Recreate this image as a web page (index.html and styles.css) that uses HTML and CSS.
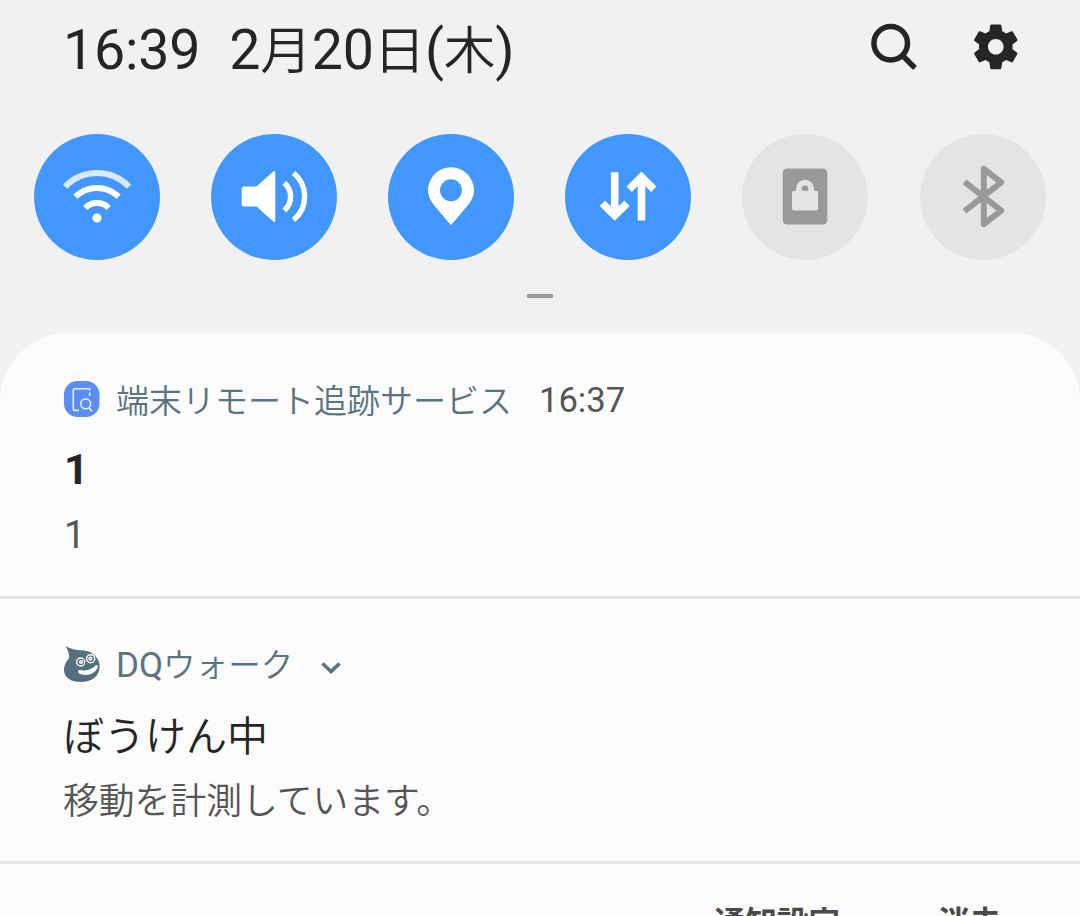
FILE: index.html
```html
<!DOCTYPE html>
<html lang="ja">

<head>
  <meta charset="UTF-8">
  <meta name="viewport" content="width=device-width, initial-scale=1.0">
  <title>通知パネル</title>
  <link rel="stylesheet" href="styles.css">
</head>

<body>

  <header id="status">
    <div id="clock">16:39</div>
    <div id="date">2<span class="jp">月</span>20<span class="jp">日</span>(<span class="jp">木</span>)</div>
    <div id="actions">
      <svg class="search" viewBox="0 0 48 48">
        <circle cx="20.7" cy="20.3" r="16.8" />
        <path d="M32.5 32.5 45 45" />
      </svg>
      <svg class="settings" viewBox="0 0 24 24">
        <path d="M19.43 12.98c.04-.32.07-.64.07-.98s-.03-.66-.07-.98l2.11-1.65c.19-.15.24-.42.12-.64l-2-3.46c-.12-.22-.39-.3-.61-.22l-2.49 1c-.52-.4-1.08-.73-1.69-.98l-.38-2.65C14.46 2.18 14.25 2 14 2h-4c-.25 0-.46.18-.49.42l-.38 2.65c-.61.25-1.17.59-1.69.98l-2.49-1c-.23-.09-.49 0-.61.22l-2 3.46c-.13.22-.07.49.12.64l2.11 1.65c-.04.32-.07.65-.07.98s.03.66.07.98l-2.11 1.65c-.19.15-.24.42-.12.64l2 3.46c.12.22.39.3.61.22l2.49-1c.52.4 1.08.73 1.69.98l.38 2.65c.03.24.24.42.49.42h4c.25 0 .46-.18.49-.42l.38-2.65c.61-.25 1.17-.59 1.69-.98l2.49 1c.23.09.49 0 .61-.22l2-3.46c.12-.22.07-.49-.12-.64l-2.11-1.65zM12 15.5c-1.93 0-3.5-1.57-3.5-3.5s1.57-3.5 3.5-3.5 3.5 1.57 3.5 3.5-1.57 3.5-3.5 3.5z" />
      </svg>
    </div>
  </header>

  <div id="toggles">
    <div class="toggle on">
      <svg viewBox="0 0 126 126">
        <g class="line" stroke-width="6">
          <path d="M31 52.7A44.2 44.2 0 0 1 95 52.7" opacity=".8" />
          <path d="M41.3 62.7A31.4 31.4 0 0 1 84.7 62.7" />
          <path d="M51.3 74A16.2 16.2 0 0 1 74.7 74" />
        </g>
        <circle cx="63" cy="84" r="4.6" />
      </svg>
    </div>
    <div class="toggle on">
      <svg viewBox="0 0 126 126">
        <path d="M32.7 52.5H45.5L62.3 37.4Q64.3 36 64.3 38.4V86.4Q64.3 88.8 62.3 87.4L45.5 72.5H32.7Q30.7 72.5 30.7 70.5V54.5Q30.7 52.5 32.7 52.5Z" />
        <g class="line" stroke-width="5.4">
          <path d="M73.3 48.7A18.5 18.5 0 0 1 73.3 76.5" />
          <path d="M82.6 39A30.5 30.5 0 0 1 82.6 86" />
        </g>
      </svg>
    </div>
    <div class="toggle on">
      <svg viewBox="0 0 126 126">
        <path fill-rule="evenodd" d="M63 91.3 45.5 70.5C41.5 65.5 40 61 40 56.3A23 23 0 0 1 86 56.3C86 61 84.5 65.5 80.5 70.5ZM63 45.2A11 11 0 0 0 63 67.2A11 11 0 0 0 63 45.2Z" />
      </svg>
    </div>
    <div class="toggle on">
      <svg viewBox="0 0 126 126">
        <g class="line" stroke-width="7.6">
          <path d="M49.7 38.3V82M37.4 69.2 49.7 81.5 62 69.2" />
          <path d="M76.5 86.4V43M64.2 55.2 76.5 42.9 88.8 55.2" />
        </g>
      </svg>
    </div>
    <div class="toggle">
      <svg viewBox="0 0 126 126">
        <rect x="40.7" y="34.5" width="44.6" height="56" rx="4.5" />
        <rect class="hole" x="50" y="56.7" width="26" height="19.8" rx="2" />
        <path class="shackle" d="M56.9 58V54.7A6.1 6.1 0 0 1 69.1 54.7V58" />
      </svg>
    </div>
    <div class="toggle">
      <svg viewBox="0 0 126 126">
        <path class="line" stroke-width="6" stroke-linejoin="round" d="M44.6 47.8 81.2 76.6 63.8 90.2V34.8L81.2 48.4 44.6 77.2" />
      </svg>
    </div>
  </div>

  <div id="handle"></div>

  <main id="notifications">
    <section class="notification first">
      <div class="app">
        <svg class="app-icon" viewBox="0 0 36 36">
          <rect width="35.5" height="36" rx="13.5" fill="#5b8df6" />
          <g fill="none" stroke="#e3f3ff" stroke-width="1.6">
            <path d="M25.7 15V11.5M25.7 9.5V7.7H11Q9.3 7.7 9.3 9.4V27.7Q9.3 29.4 11 29.4H15" />
            <circle cx="21.7" cy="22.9" r="4.9" />
            <path d="M24.5 26.3 28 30.2" />
          </g>
        </svg>
        <span class="name jp">端末リモート追跡サービス</span>
        <span class="time">16:37</span>
      </div>
      <h2>1</h2>
      <p>1</p>
    </section>

    <section class="notification">
      <div class="app">
        <svg class="app-icon slime" viewBox="0 0 108 108">
          <path fill="#566f7c" d="M5 0C22 10 34 12 54 13C86 15 107 36 107 62C107 90 82 108 50 108C20 108 0 94 0 72C0 56 7 47 14 38C19 30 12 14 5 0Z" />
          <g fill="none" stroke="#fcfcfc" stroke-width="4.5">
            <circle cx="50" cy="48" r="12" />
            <circle cx="80" cy="38" r="12" />
            <circle cx="51" cy="48" r="4" />
            <circle cx="79" cy="38" r="4" />
          </g>
          <path fill="#fcfcfc" d="M47 72C65 76 82 71 94 59C100 54 104 60 100 67C90 86 66 92 47 83C41 80 41 71 47 72Z" />
        </svg>
        <span class="name">DQ<span class="jp">ウォーク</span></span>
        <svg class="chevron" viewBox="0 0 20 14">
          <path d="M1.5 2.5 10 10.5 18.5 2.5" />
        </svg>
      </div>
      <h2 class="jp-title">ぼうけん中</h2>
      <p class="jp-text">移動を計測しています。</p>
    </section>

    <footer>
      <button>通知設定</button>
      <button>消去</button>
    </footer>
  </main>

</body>

</html>
```
FILE: styles.css
```css
* {
  margin: 0;
  padding: 0;
  box-sizing: border-box;
}

html,
body {
  height: 100%;
}

body {
  display: flex;
  flex-direction: column;
  overflow: hidden;
  background-color: #f1f1f1;
  color: #252525;
  font-family: Roboto, 'Noto Sans CJK JP', sans-serif;
}

svg {
  display: block;
  flex: none;
}

.jp {
  font-family: 'Noto Sans CJK JP', sans-serif;
  font-size: .93em;
  font-weight: 350;
}

#status {
  display: flex;
  align-items: center;
  flex: none;
  height: 98px;
  padding: 0 57px 0 63px;
  font-size: 55.5px;
  line-height: 98px;
  white-space: nowrap;
}

#status .jp {
  line-height: 1;
}

#clock,
#date {
  padding-top: 3px;
  line-height: 95px;
  letter-spacing: -.2px;
}

#date {
  margin-left: 29px;
}

#actions {
  display: flex;
  align-items: center;
  gap: 51px;
  margin-left: auto;
  padding-bottom: 4px;
}

.search {
  width: 48px;
  height: 48px;
  fill: none;
  stroke: #252525;
  stroke-width: 5.5;
}

.settings {
  width: 53.6px;
  height: 53.6px;
  fill: #252525;
}

#toggles {
  display: flex;
  gap: 51.12px;
  flex: none;
  padding: 35.6px 34px 0;
}

.toggle {
  flex: none;
  width: 126px;
  height: 126px;
  border-radius: 50%;
  background-color: #e4e4e4;
  color: #999;
  fill: currentColor;
}

.toggle.on {
  background-color: #4297ff;
  color: #fff;
}

.toggle .line {
  fill: none;
  stroke: currentColor;
}

.toggle .hole {
  fill: #e4e4e4;
}

.toggle .shackle {
  fill: none;
  stroke: #e4e4e4;
  stroke-width: 5.8;
}

#handle {
  flex: none;
  width: 26px;
  height: 4.4px;
  margin: 34.4px auto 34.6px;
  border-radius: 1px;
  background-color: #999;
}

#notifications {
  flex: 1;
  min-height: 0;
  border-radius: 68px 68px 0 0;
  background-color: #fcfcfc;
}

.notification {
  height: 265px;
  padding: 41px 64px 0;
  border-bottom: 3px solid #e5e5e5;
}

.notification.first {
  height: 266px;
}

.app {
  display: flex;
  align-items: center;
  height: 50px;
  font-size: 35px;
  line-height: 50px;
}

.app-icon {
  width: 36px;
  height: 36px;
  margin-right: 16px;
}

.app-icon.slime {
  margin-bottom: 2px;
}

.name {
  color: #5a7380;
}

.name.jp {
  font-size: 33px;
}

.time {
  margin: 3px 0 0 27px;
  color: #555;
  font-size: 34.6px;
}

.chevron {
  width: 20px;
  height: 14px;
  margin: 6px 0 0 28px;
  fill: none;
  stroke: #5a7380;
  stroke-width: 3.6;
}

h2 {
  height: 60px;
  margin-top: 15px;
  font-size: 43px;
  font-weight: 700;
  line-height: 60px;
}

p {
  height: 50px;
  margin-top: 11px;
  color: #555;
  font-size: 38px;
  line-height: 50px;
}

.jp-title {
  margin: 17px 0 0 -1px;
  font-size: 41px;
  font-weight: 350;
}

.jp-text {
  margin: 10px 0 0 -1px;
  font-size: 35.8px;
  font-weight: 350;
}

footer {
  display: flex;
  justify-content: flex-end;
  gap: 98px;
  padding: 40px 79px 0;
}

footer button {
  border: none;
  background: none;
  color: #4a4a4a;
  font: 700 31.5px/32px 'Noto Sans CJK JP', sans-serif;
}
```
